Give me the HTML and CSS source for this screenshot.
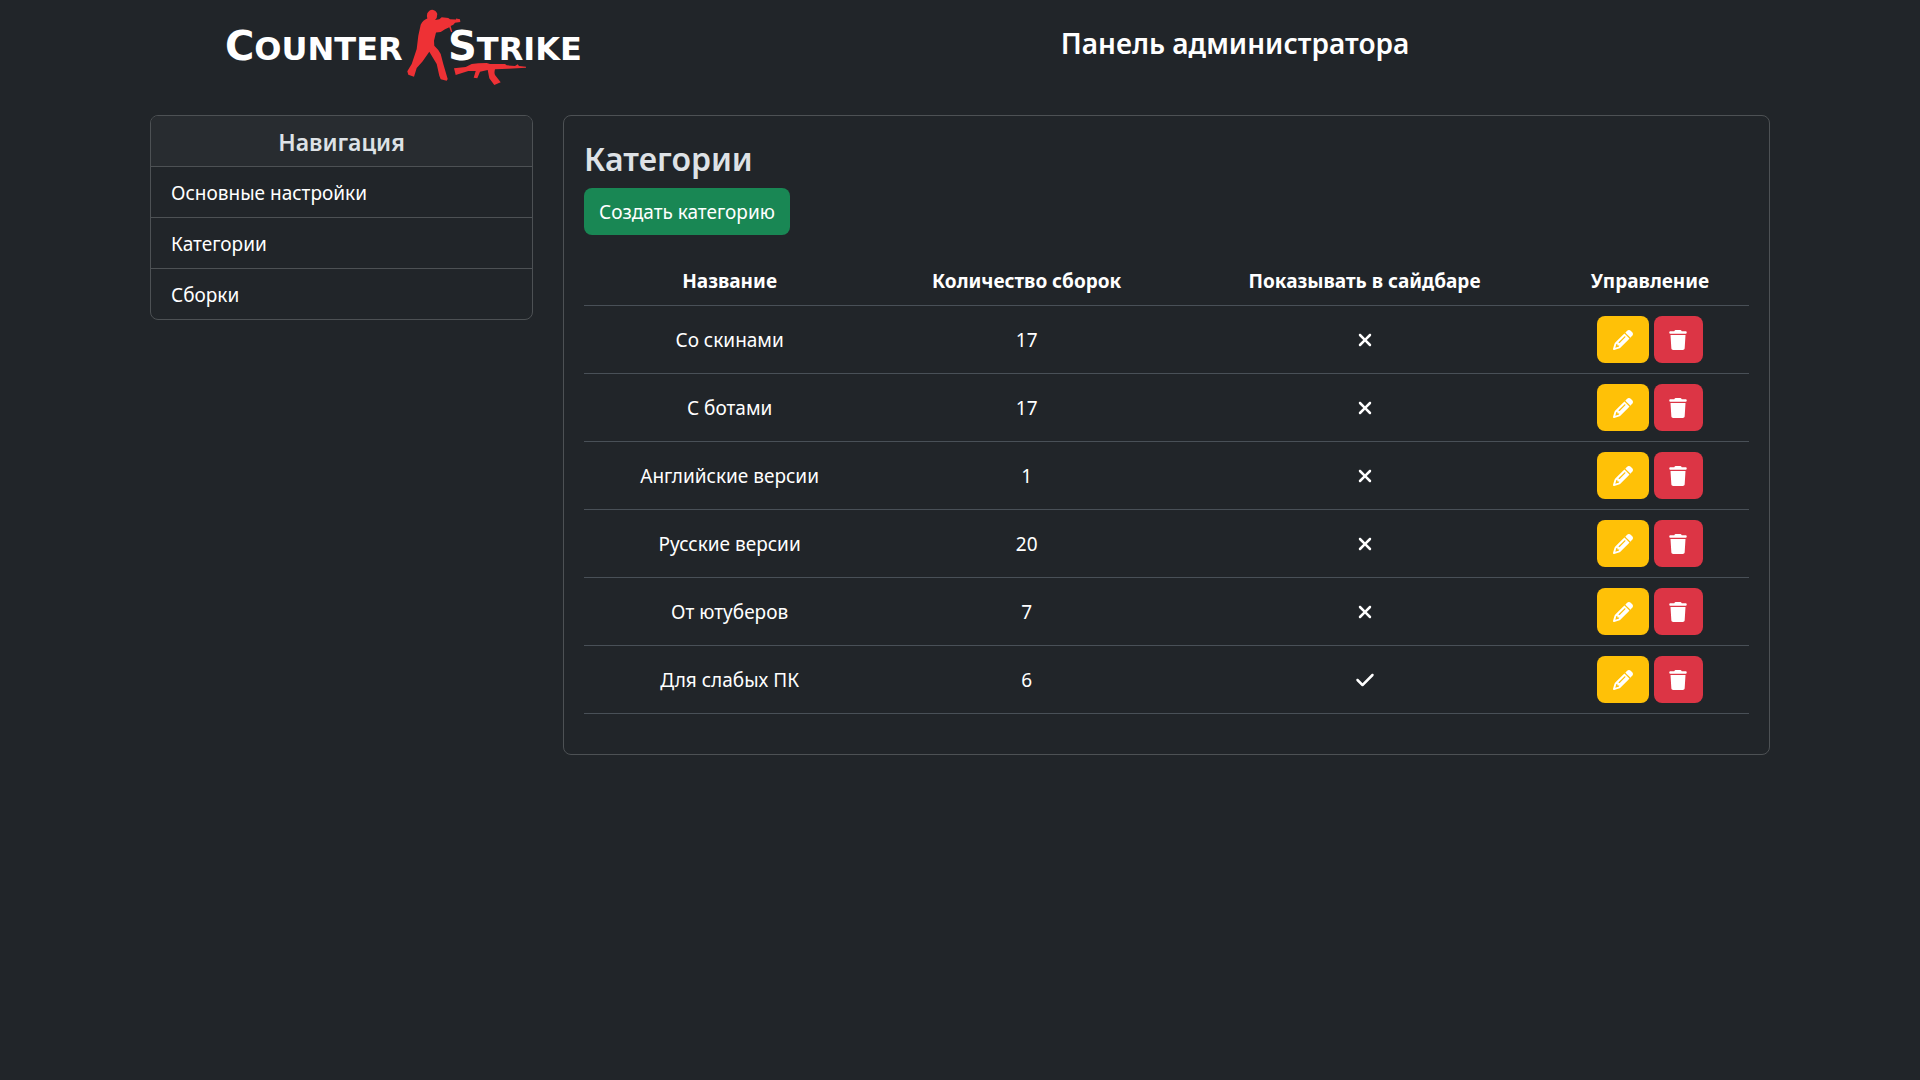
FILE: index.html
```html
<!DOCTYPE html>
<html lang="ru">
<head>
    <meta charset="UTF-8">
    <meta name="viewport" content="width=device-width, initial-scale=1.0">
    <title>Панель администратора</title>
    <link rel="stylesheet" href="styles.css">
</head>
<body>
    <svg class="sprite" aria-hidden="true">
        <symbol id="pencil" viewBox="0 0 512 512"><path d="M410.3 231l11.3-11.3-33.9-33.9-62.1-62.1L291.7 89.8l-11.3 11.3-22.6 22.6L58.6 322.9c-10.4 10.4-18 23.3-22.2 37.4L1 480.7c-2.5 8.4-.2 17.5 6.1 23.7s15.3 8.5 23.7 6.1l120.3-35.4c14.1-4.2 27-11.8 37.4-22.2L387.7 253.7 410.3 231zM160 399.4l-9.1 22.7c-4 3.1-8.5 5.4-13.3 6.9L59.4 452l23-78.1c1.4-4.9 3.8-9.4 6.9-13.3l22.7-9.1v32c0 8.8 7.2 16 16 16h32zM362.7 18.7L348.3 33.2 325.7 55.8 314.3 67.1l33.9 33.9 62.1 62.1 33.9 33.9 11.3-11.3 22.6-22.6 14.5-14.5c25-25 25-65.5 0-90.5L453.3 18.7c-25-25-65.5-25-90.5 0zm-47.4 168l-144 144c-6.2 6.2-16.4 6.2-22.6 0s-6.2-16.4 0-22.6l144-144c6.2-6.2 16.4-6.2 22.6 0s6.2 16.4 0 22.6z"/></symbol>
        <symbol id="trash" viewBox="0 0 448 512"><path d="M135.2 17.7L128 32H32C14.3 32 0 46.3 0 64S14.3 96 32 96H416c17.7 0 32-14.3 32-32s-14.3-32-32-32H320l-7.2-14.3C307.4 6.8 296.3 0 284.2 0H163.8c-12.1 0-23.2 6.8-28.6 17.7zM416 128H32L53.2 467c1.6 25.3 22.6 45 47.9 45H346.9c25.3 0 46.3-19.7 47.9-45L416 128z"/></symbol>
        <symbol id="xmark" viewBox="0 0 384 512"><path d="M342.6 150.6c12.5-12.5 12.5-32.8 0-45.3s-32.8-12.5-45.3 0L192 210.7 86.6 105.4c-12.5-12.5-32.8-12.5-45.3 0s-12.5 32.8 0 45.3L146.7 256 41.4 361.4c-12.5 12.5-12.5 32.8 0 45.3s32.8 12.5 45.3 0L192 301.3 297.4 406.6c12.5 12.5 32.8 12.5 45.3 0s12.5-32.8 0-45.3L237.3 256 342.6 150.6z"/></symbol>
        <symbol id="check" viewBox="0 0 448 512"><path d="M438.6 105.4c12.5 12.5 12.5 32.8 0 45.3l-256 256c-12.5 12.5-32.8 12.5-45.3 0l-128-128c-12.5-12.5-12.5-32.8 0-45.3s32.8-12.5 45.3 0L160 338.7 393.4 105.4c12.5-12.5 32.8-12.5 45.3 0z"/></symbol>
    </svg>

    <div class="container">
        <header class="header">
            <a href="#" class="logo" aria-label="Counter Strike">
                <svg width="370" height="90" viewBox="225 0 370 90">
                    <text class="logo-text" x="225" y="60"><tspan class="logo-cap">C</tspan>OUNTER</text>
                    <text class="logo-text" x="448" y="60"><tspan class="logo-cap">S</tspan>TRIKE</text>
                    <path class="logo-red" d="M427.300 13.300Q429 10 432.300 9.700 436 10 437.300 14L436.700 18 435 20 439.300 19.300 441.700 17.300 448.300 18 450 19.300 456 19.500V18.500L460 19.300 460.300 22 455 22.700 453.300 24.700 450.700 26 452.300 32H451L449.300 27.300 445 29.300 440.700 32 436 32.500 434 40.700 434.300 45.700Q439 50 440.700 54L443.300 64 447.700 79 446.700 80.700 440.700 79.300 439.300 75.700 436.700 64 429.300 51.700 422.700 61.300 416.700 68 414 76.700 408.300 74.700 407.300 71.300 411.700 64 416.700 49 418.300 35.700 420.700 24.700Q423 20 427.300 18.500 426.500 16 427.300 13.300Z"/>
                    <path class="logo-red" d="M454 68.300L465.700 67 471.700 64 478.300 63.300 486.700 63 490 64H505L506.700 65.300 515 66 517.700 64.300 519 66 526 66.700V67.700L508.300 68.700 495 69.300Q494 73 495 75L500.700 82.300 494.300 85 489.300 78.300 487.700 70 480 71.700 477.300 78.300 473.700 77.700 475.700 71H468.300L455.700 75Z"/>
                </svg>
            </a>
            <h4 class="title">Панель администратора</h4>
        </header>

        <div class="row">
            <nav class="card sidebar">
                <h5 class="card-header">Навигация</h5>
                <a href="#" class="nav-item">Основные настройки</a>
                <a href="#" class="nav-item">Категории</a>
                <a href="#" class="nav-item">Сборки</a>
            </nav>

            <main class="card content">
                <h3>Категории</h3>
                <button type="button" class="btn btn-create">Создать категорию</button>
                <table>
                    <thead>
                        <tr>
                            <th class="col-name">Название</th>
                            <th class="col-count">Количество сборок</th>
                            <th class="col-show">Показывать в сайдбаре</th>
                            <th class="col-actions">Управление</th>
                        </tr>
                    </thead>
                    <tbody id="categories"></tbody>
                </table>
            </main>
        </div>
    </div>
    <script>
        const categories = [
            ["Со скинами", 17, false],
            ["С ботами", 17, false],
            ["Английские версии", 1, false],
            ["Русские версии", 20, false],
            ["От ютуберов", 7, false],
            ["Для слабых ПК", 6, true]
        ];

        const tableBody = document.getElementById("categories");
        categories.forEach(([name, count, shown]) => {
            const row = document.createElement("tr");
            row.innerHTML = `
                <td>${name}</td>
                <td>${count}</td>
                <td><svg class="icon"><use href="#${shown ? "check" : "xmark"}"/></svg></td>
                <td>
                    <div class="actions">
                        <button type="button" class="btn btn-edit" aria-label="Редактировать"><svg class="icon"><use href="#pencil"/></svg></button>
                        <button type="button" class="btn btn-delete" aria-label="Удалить"><svg class="icon"><use href="#trash"/></svg></button>
                    </div>
                </td>
            `;
            tableBody.appendChild(row);
        });
    </script>
</body>
</html>
```
FILE: styles.css
```css
* {
    box-sizing: border-box;
}

body {
    margin: 0;
    background-color: #212529;
    color: #fff;
    font-family: "Segoe UI", "Noto Sans", sans-serif;
    font-size: 19px;
    line-height: 30px;
}

h3, h4, h5 {
    margin: 0;
    font-weight: 600;
}

.sprite {
    display: none;
}

.container {
    max-width: 1650px;
    margin: 0 auto;
    padding: 0 15px;
}

.header {
    display: grid;
    grid-template-columns: 1fr 2fr;
    margin: 0 -15px 25px;
    text-align: center;
}

.logo svg {
    display: block;
    margin: 0 auto;
}

.logo-text {
    font-family: "DejaVu Sans", sans-serif;
    font-weight: bold;
    font-size: 32px;
    fill: #fff;
}

.logo-cap {
    font-size: 40px;
}

.logo-red {
    fill: #ee3135;
}

.title {
    padding-top: 25px;
    font-size: 28px;
    line-height: 36px;
}

.row {
    display: grid;
    grid-template-columns: 383fr 1207fr;
    gap: 30px;
    align-items: start;
}

.card {
    border: 1px solid #4d5154;
    border-radius: 8px;
    overflow: hidden;
}

.card-header {
    padding: 11px 20px 9px;
    background-color: #282c30;
    color: #dee2e6;
    font-size: 23px;
    text-align: center;
}

.nav-item {
    display: block;
    padding: 11px 20px 9px;
    border-top: 1px solid #4d5154;
    color: #fff;
    text-decoration: none;
}

.content {
    padding: 20px;
}

.content h3 {
    padding-top: 2px;
    margin-bottom: 8px;
    color: #dee2e6;
    font-size: 32px;
    line-height: 42px;
}

.btn {
    display: inline-flex;
    align-items: center;
    justify-content: center;
    height: 47px;
    padding: 0 15px;
    border: none;
    border-radius: 8px;
    color: #fff;
    font: inherit;
    cursor: pointer;
}

.btn-create {
    background-color: #198754;
}

.btn-edit {
    width: 52px;
    background-color: #ffc107;
}

.btn-delete {
    width: 49px;
    background-color: #dc3545;
}

table {
    width: 100%;
    margin: 20px 0;
    border-collapse: collapse;
    table-layout: fixed;
    text-align: center;
}

th, td {
    padding: 10px 0;
    border-bottom: 1px solid #495057;
}

th {
    padding: 11px 0 9px;
}

.col-name {
    width: 25%;
}

.col-count {
    width: 26%;
}

.col-show {
    width: 32%;
}

.col-actions {
    width: 17%;
}

.icon {
    display: block;
    width: 20px;
    height: 20px;
    margin: 0 auto;
    fill: #fff;
    flex-shrink: 0;
}

.actions {
    display: flex;
    justify-content: center;
    gap: 5px;
}
```
